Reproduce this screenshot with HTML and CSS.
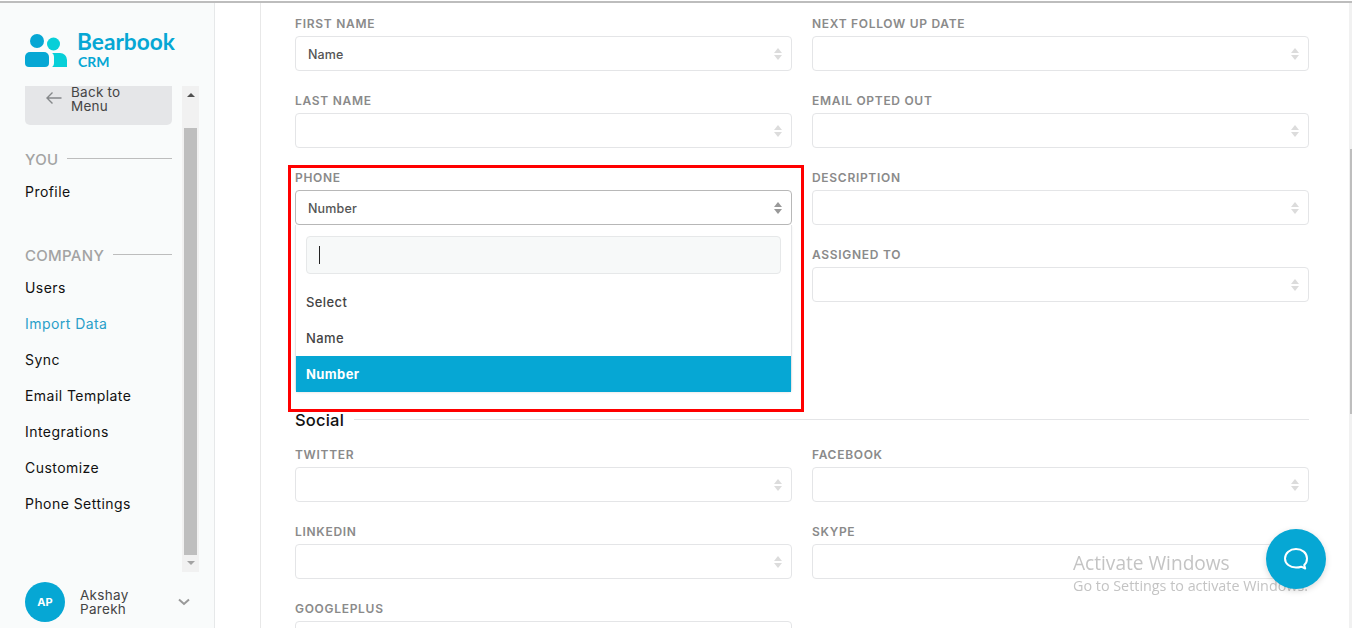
FILE: index.html
```html
<!DOCTYPE html>
<html lang="en">
<head>
<meta charset="utf-8">
<title>Bearbook CRM</title>
<link rel="stylesheet" href="styles.css">
</head>
<body>
<div class="app">
  <aside class="sidebar">
    <div class="logo">
      <svg class="logo-mark" width="44" height="34" viewBox="0 0 44 34">
        <circle cx="12" cy="7" r="7" fill="#06a7d4"/>
        <circle cx="28.500" cy="10" r="6.500" fill="#08cfd8"/>
        <path d="M0 23a5 5 0 0 1 5-5h14a5 5 0 0 1 5 5v6a4 4 0 0 1-4 4H4a4 4 0 0 1-4-4z" fill="#06a7d4"/>
        <path d="M27 19h8a7 7 0 0 1 7 7v7H27c1.500-1 2-2.500 2-4v-6c0-1.500-.5-3-2-4z" fill="#08cfd8"/>
      </svg>
      <div class="logo-text">
        <div class="logo-name">Bearbook</div>
        <div class="logo-sub">CRM</div>
      </div>
    </div>
    <div class="side-scroll">
      <div class="side-list">
        <button class="back">
          <svg class="back-arrow" width="18" height="14" viewBox="0 0 18 14"><path d="M16.500 7H2M7.500 1.500 2 7l5.500 5.500" fill="none" stroke="#85888a" stroke-width="1.400"/></svg>
          <span>Back to<br>Menu</span>
        </button>
        <div class="side-head head-you"><span>YOU</span><i></i></div>
        <a class="nav-item">Profile</a>
        <div class="side-head head-company"><span>COMPANY</span><i></i></div>
        <a class="nav-item">Users</a>
        <a class="nav-item active">Import Data</a>
        <a class="nav-item">Sync</a>
        <a class="nav-item">Email Template</a>
        <a class="nav-item">Integrations</a>
        <a class="nav-item">Customize</a>
        <a class="nav-item">Phone Settings</a>
      </div>
      <div class="scrollbar">
        <span class="arrow up"></span>
        <span class="thumb"></span>
        <span class="arrow down"></span>
      </div>
    </div>
    <div class="user">
      <div class="avatar">AP</div>
      <div class="user-name">Akshay<br>Parekh</div>
      <svg class="user-caret" width="12" height="8" viewBox="0 0 12 8"><path d="M1 1.500 6 6l5-4.500" fill="none" stroke="#999" stroke-width="2"/></svg>
    </div>
  </aside>
  <main class="main">
    <div class="content">
      <div class="form-grid">
        <div class="field"><label>FIRST NAME</label><div class="select">Name<span class="updown"></span></div></div>
        <div class="field"><label>NEXT FOLLOW UP DATE</label><div class="select"><span class="updown"></span></div></div>
        <div class="field"><label>LAST NAME</label><div class="select"><span class="updown"></span></div></div>
        <div class="field"><label>EMAIL OPTED OUT</label><div class="select"><span class="updown"></span></div></div>
        <div class="field open">
          <label>PHONE</label>
          <div class="select focused">Number<span class="updown dark"></span></div>
          <div class="dropdown">
            <div class="search"><span class="cursor"></span></div>
            <div class="option">Select</div>
            <div class="option">Name</div>
            <div class="option selected">Number</div>
          </div>
          <div class="highlight"></div>
        </div>
        <div class="field"><label>DESCRIPTION</label><div class="select"><span class="updown"></span></div></div>
        <div class="field spacer"></div>
        <div class="field"><label>ASSIGNED TO</label><div class="select"><span class="updown"></span></div></div>
      </div>
      <div class="section-title"><h2>Social</h2><i></i></div>
      <div class="form-grid">
        <div class="field"><label>TWITTER</label><div class="select"><span class="updown"></span></div></div>
        <div class="field"><label>FACEBOOK</label><div class="select"><span class="updown"></span></div></div>
        <div class="field"><label>LINKEDIN</label><div class="select"><span class="updown"></span></div></div>
        <div class="field"><label>SKYPE</label><div class="select"><span class="updown"></span></div></div>
        <div class="field"><label>GOOGLEPLUS</label><div class="select"><span class="updown"></span></div></div>
      </div>
    </div>
    <div class="page-scroll"><span class="page-thumb"></span></div>
  </main>
</div>
<div class="watermark">
  <div class="wm-title">Activate Windows</div>
  <div class="wm-sub">Go to Settings to activate Windows.</div>
</div>
<button class="chat" aria-label="Chat">
  <svg width="26" height="24" viewBox="0 0 26 24"><path d="M13 2c6 0 11 3.800 11 9.500 0 2.700-1 5-2.800 6.500l1 3.500-4-1.800c-1.600.6-3.300.8-5.200.8-6 0-11-3.500-11-9S7 2 13 2z" fill="none" stroke="#fff" stroke-width="2" stroke-linejoin="round"/></svg>
</button>
</body>
</html>
```
FILE: styles.css
```css
* { box-sizing: border-box; }
html, body { margin: 0; height: 100%; overflow: hidden; background: #fff; }
body { font-family: Inter, "Liberation Sans", sans-serif; color: #333; }
.app {
  display: flex;
  height: 628px;
  border-top: 2px solid #bdbdbd;
  margin-top: 1px;
}
.sidebar {
  width: 215px;
  flex: none;
  background: #f9fbfb;
  border-right: 1px solid #e6e8e9;
  display: flex;
  flex-direction: column;
  padding-left: 25px;
}
.logo { display: flex; gap: 9px; height: 83px; padding-top: 28px; }
.logo-mark { margin-top: 3px; }
.logo-name { margin-left: -1px; font-family: Lato, sans-serif; font-weight: 700; font-size: 22.700px; line-height: 22px; color: #06a7d4; }
.logo-sub { font-family: Lato, sans-serif; font-weight: 700; font-size: 14px; line-height: 17px; color: #06a7d4; }
.side-scroll { display: flex; height: 486px; }
.side-list { width: 147px; flex: none; }
.back {
  display: flex;
  align-items: center;
  gap: 8px;
  width: 147px;
  height: 39px;
  padding: 0 0 13px 20px;
  border: 0;
  border-radius: 0 0 5px 5px;
  background: #e5e6e8;
  color: #444;
  font: 13.500px/14px Inter, sans-serif;
  letter-spacing: .25px;
  text-align: left;
}
.back-arrow { margin-bottom: 2px; }
.side-head { display: flex; align-items: center; gap: 9px; color: #a3a3a3; font-size: 15px; font-weight: 500; letter-spacing: .3px; line-height: 18px; }
.side-head i { flex: 1; height: 1px; background: #bdbdbd; margin-bottom: 4px; }
.head-you { margin-top: 26px; }
.head-company { margin-top: 37px; }
.nav-item { display: block; height: 36px; line-height: 36px; font-size: 14px; letter-spacing: .45px; color: #111; }
.head-you + .nav-item { margin-top: 5px; }
.head-company + .nav-item { margin-top: 5px; }
.nav-item.active { color: #2a9fc9; }
.scrollbar { width: 17px; margin-left: 10px; height: 486px; background: #f1f1f1; display: flex; flex-direction: column; align-items: center; }
.arrow { width: 0; height: 0; border-left: 4px solid transparent; border-right: 4px solid transparent; flex: none; }
.arrow.up { border-bottom: 4px solid #505050; margin: 7px 0 31px; }
.arrow.down { border-top: 4px solid #a3a3a3; margin: 6px 0 0; }
.thumb { width: 13px; height: 427px; background: #bebebe; flex: none; }
.user { display: flex; align-items: center; margin-top: 10px; height: 40px; }
.avatar { width: 40px; height: 40px; border-radius: 50%; background: #06a7d4; color: #fff; font-size: 11px; font-weight: 700; display: flex; align-items: center; justify-content: center; flex: none; }
.user-name { margin-left: 15px; font-size: 13.500px; letter-spacing: .3px; line-height: 14px; color: #444; width: 98px; }
.user-caret { flex: none; }
.main { flex: 1; display: flex; overflow: hidden; }
.content {
  flex: 1;
  margin-left: 45px;
  border-left: 1px solid #e8e8e8;
  padding: 12px 40px 0 34px;
  overflow: hidden;
}
.form-grid { display: grid; grid-template-columns: 497px 497px; column-gap: 20px; grid-auto-rows: 77px; }
.field { position: relative; }
.field label { display: block; height: 21px; font-size: 12px; font-weight: 600; line-height: 18px; color: #8a8a8a; letter-spacing: .7px; }
.select {
  position: relative;
  height: 35px;
  border: 1px solid #e4e5e7;
  border-radius: 4px;
  background: #fff;
  padding-left: 12px;
  font-size: 12.500px;
  font-weight: 500;
  letter-spacing: .15px;
  line-height: 35px;
  color: #555;
}
.select.focused { border-color: #b8b8b8; }
.updown { position: absolute; right: 9px; top: 11px; width: 8px; height: 12px; }
.updown::before, .updown::after { content: ""; position: absolute; left: 0; width: 0; height: 0; border-left: 4px solid transparent; border-right: 4px solid transparent; }
.updown::before { top: 0; border-bottom: 5px solid #dcdcdc; }
.updown::after { bottom: 0; border-top: 5px solid #dcdcdc; }
.updown.dark::before { border-bottom-color: #999; }
.updown.dark::after { border-top-color: #999; }
.dropdown {
  position: absolute;
  z-index: 2;
  left: 0;
  right: 0;
  top: 56px;
  height: 167px;
  background: #fff;
  border: 1px solid #e4e5e7;
  border-top: 0;
  border-radius: 0 0 4px 4px;
  padding-top: 11px;
  box-shadow: 0 1px 2px rgba(0,0,0,.08);
}
.search { height: 38px; margin: 0 10px 10px; background: #f7f9f9; border: 1px solid #e6e8e9; border-radius: 4px; padding: 9px 12px; }
.cursor { display: block; width: 1px; height: 18px; background: #222; }
.option { height: 36px; line-height: 36px; padding-left: 10px; font-size: 13px; font-weight: 500; letter-spacing: .4px; color: #444; }
.option.selected { background: #06a7d4; color: #fff; font-weight: 700; }
.highlight { position: absolute; z-index: 3; left: -7px; top: -4px; width: 516px; height: 247px; border: 3px solid #f00; pointer-events: none; }
.section-title { display: flex; align-items: center; height: 28px; margin: 83px 0 0; }
.section-title h2 { margin: 0; font-size: 16.500px; font-weight: 500; letter-spacing: .2px; color: #111; line-height: 22px; }
.section-title i { flex: 1; height: 1px; background: #e4e5e7; margin: -2px 0 0 10px; }
.section-title + .form-grid { margin-top: 12px; }
.page-scroll { width: 3px; background: #f1f1f1; flex: none; padding: 146px 0 0 1px; }
.page-thumb { display: block; width: 2px; height: 265px; background: #bebebe; }
.watermark { position: fixed; left: 1073px; top: 550px; color: #c4c4c4; font-family: "Open Sans", sans-serif; pointer-events: none; z-index: 4; }
.wm-title { font-size: 19.100px; line-height: 26px; }
.wm-sub { font-size: 14.350px; line-height: 20px; }
.chat { position: fixed; left: 1266px; top: 529px; width: 60px; height: 60px; border: 0; border-radius: 50%; background: #06a7d4; box-shadow: 0 2px 6px rgba(0,0,0,.15); display: flex; align-items: center; justify-content: center; padding: 0; z-index: 5; }
```
